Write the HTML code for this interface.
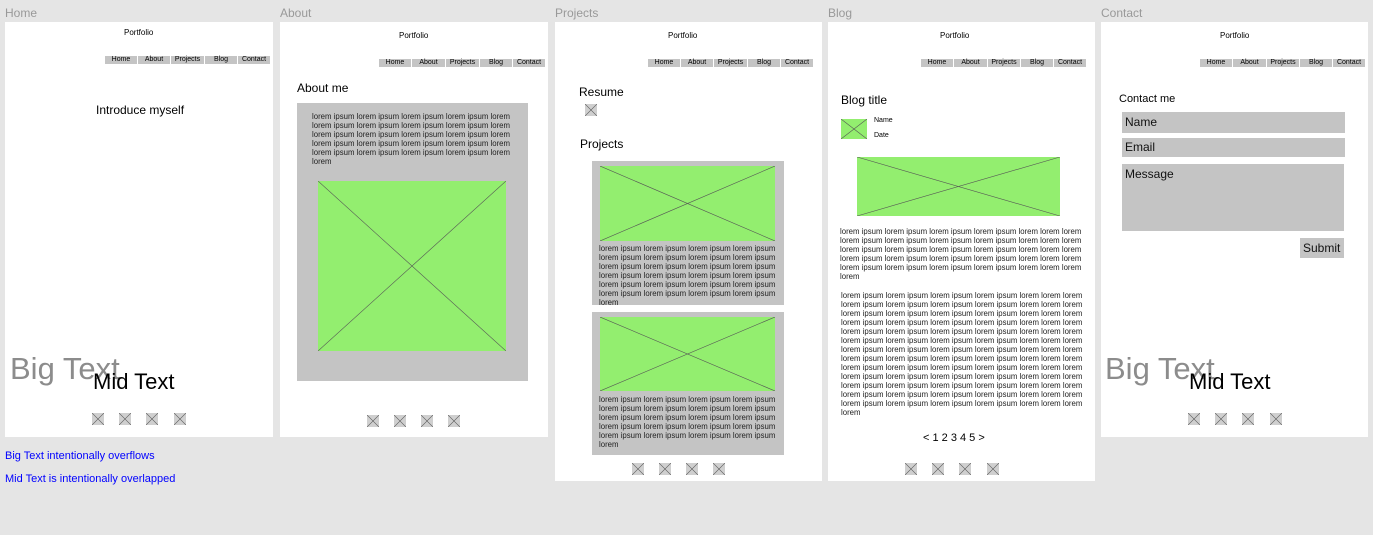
<!DOCTYPE html>
<html><head><meta charset="utf-8"><style>
*{margin:0;padding:0;box-sizing:border-box}
body{width:1373px;height:535px;background:#e5e5e5;position:relative;overflow:hidden;font-family:"Liberation Sans",Arial,sans-serif;color:#000}
.a{position:absolute}
.lbl{font-size:12px;color:#999;top:6px}
.fr{background:#fff}
.pf{font-size:8px;line-height:10px}
.nav{font-size:7px;line-height:8px;text-align:center;background:#c4c4c4;height:8px}
.h{font-size:12px;line-height:14px}
.lo{font-size:7.8px;line-height:9px;white-space:nowrap;color:#222}
.ic{width:12px;height:12px;background:#cfcfcf}
.big{font-size:31px;color:#8c8c8c;line-height:32px}
.mid{font-size:22px;line-height:24px}
.blue{color:#0000ff;font-size:11px}
.fld{background:#c4c4c4;font-size:12px;padding:3px 3px;line-height:14px;color:#111}
</style></head><body>
<svg width="0" height="0" style="position:absolute"><defs>
<symbol id="x" viewBox="0 0 10 10" preserveAspectRatio="none"><path d="M0 0L10 10M10 0L0 10" stroke="#555" fill="none" vector-effect="non-scaling-stroke" style="stroke-width:.6px"/></symbol>
</defs></svg>

<div class="a lbl" style="left:5px">Home</div>
<div class="a lbl" style="left:280px">About</div>
<div class="a lbl" style="left:555px">Projects</div>
<div class="a lbl" style="left:828px">Blog</div>
<div class="a lbl" style="left:1101px">Contact</div>

<!-- HOME -->
<div class="a fr" style="left:5px;top:22px;width:268px;height:415px"></div>
<div class="a pf" style="left:124px;top:28px">Portfolio</div>
<div class="a nav" style="left:105px;top:56px;width:32px">Home</div>
<div class="a nav" style="left:138px;top:56px;width:32px">About</div>
<div class="a nav" style="left:171px;top:56px;width:33px">Projects</div>
<div class="a nav" style="left:205px;top:56px;width:32px">Blog</div>
<div class="a nav" style="left:238px;top:56px;width:32px">Contact</div>
<div class="a h" style="left:96px;top:103px">Introduce myself</div>
<div class="a big" style="left:10px;top:353px">Big Text</div>
<div class="a mid" style="left:93px;top:370px">Mid Text</div>
<svg class="a ic" style="left:92px;top:413px"><use href="#x" width="12" height="12"/></svg>
<svg class="a ic" style="left:119px;top:413px"><use href="#x" width="12" height="12"/></svg>
<svg class="a ic" style="left:146px;top:413px"><use href="#x" width="12" height="12"/></svg>
<svg class="a ic" style="left:174px;top:413px"><use href="#x" width="12" height="12"/></svg>
<div class="a blue" style="left:5px;top:450px">Big Text intentionally overflows</div>
<div class="a blue" style="left:5px;top:473px">Mid Text is intentionally overlapped</div>

<!-- ABOUT -->
<div class="a fr" style="left:280px;top:22px;width:268px;height:415px"></div>
<div class="a pf" style="left:399px;top:31px">Portfolio</div>
<div class="a nav" style="left:379px;top:59px;width:32px">Home</div>
<div class="a nav" style="left:412px;top:59px;width:33px">About</div>
<div class="a nav" style="left:446px;top:59px;width:33px">Projects</div>
<div class="a nav" style="left:480px;top:59px;width:32px">Blog</div>
<div class="a nav" style="left:513px;top:59px;width:32px">Contact</div>
<div class="a h" style="left:297px;top:81px">About me</div>
<div class="a" style="left:297px;top:103px;width:231px;height:278px;background:#c4c4c4"></div>
<div class="a lo" style="left:312px;top:112px">lorem ipsum lorem ipsum lorem ipsum lorem ipsum lorem<br>lorem ipsum lorem ipsum lorem ipsum lorem ipsum lorem<br>lorem ipsum lorem ipsum lorem ipsum lorem ipsum lorem<br>lorem ipsum lorem ipsum lorem ipsum lorem ipsum lorem<br>lorem ipsum lorem ipsum lorem ipsum lorem ipsum lorem<br>lorem</div>
<svg class="a" style="left:318px;top:181px;width:188px;height:170px;background:#93ee6f"><use href="#x" width="188" height="170"/></svg>
<svg class="a ic" style="left:367px;top:415px"><use href="#x" width="12" height="12"/></svg>
<svg class="a ic" style="left:394px;top:415px"><use href="#x" width="12" height="12"/></svg>
<svg class="a ic" style="left:421px;top:415px"><use href="#x" width="12" height="12"/></svg>
<svg class="a ic" style="left:448px;top:415px"><use href="#x" width="12" height="12"/></svg>

<!-- PROJECTS -->
<div class="a fr" style="left:555px;top:22px;width:267px;height:459px"></div>
<div class="a pf" style="left:668px;top:31px">Portfolio</div>
<div class="a nav" style="left:648px;top:59px;width:32px">Home</div>
<div class="a nav" style="left:681px;top:59px;width:32px">About</div>
<div class="a nav" style="left:714px;top:59px;width:33px">Projects</div>
<div class="a nav" style="left:748px;top:59px;width:32px">Blog</div>
<div class="a nav" style="left:781px;top:59px;width:32px">Contact</div>
<div class="a h" style="left:579px;top:85px">Resume</div>
<svg class="a ic" style="left:585px;top:104px"><use href="#x" width="12" height="12"/></svg>
<div class="a h" style="left:580px;top:137px">Projects</div>
<div class="a" style="left:592px;top:161px;width:192px;height:144px;background:#c4c4c4"></div>
<svg class="a" style="left:600px;top:166px;width:175px;height:75px;background:#93ee6f"><use href="#x" width="175" height="75"/></svg>
<div class="a lo" style="left:599px;top:244px">lorem ipsum lorem ipsum lorem ipsum lorem ipsum<br>lorem ipsum lorem ipsum lorem ipsum lorem ipsum<br>lorem ipsum lorem ipsum lorem ipsum lorem ipsum<br>lorem ipsum lorem ipsum lorem ipsum lorem ipsum<br>lorem ipsum lorem ipsum lorem ipsum lorem ipsum<br>lorem ipsum lorem ipsum lorem ipsum lorem ipsum<br>lorem</div>
<div class="a" style="left:592px;top:312px;width:192px;height:143px;background:#c4c4c4"></div>
<svg class="a" style="left:600px;top:317px;width:175px;height:74px;background:#93ee6f"><use href="#x" width="175" height="74"/></svg>
<div class="a lo" style="left:599px;top:395px">lorem ipsum lorem ipsum lorem ipsum lorem ipsum<br>lorem ipsum lorem ipsum lorem ipsum lorem ipsum<br>lorem ipsum lorem ipsum lorem ipsum lorem ipsum<br>lorem ipsum lorem ipsum lorem ipsum lorem ipsum<br>lorem ipsum lorem ipsum lorem ipsum lorem ipsum<br>lorem</div>
<svg class="a ic" style="left:632px;top:463px"><use href="#x" width="12" height="12"/></svg>
<svg class="a ic" style="left:659px;top:463px"><use href="#x" width="12" height="12"/></svg>
<svg class="a ic" style="left:686px;top:463px"><use href="#x" width="12" height="12"/></svg>
<svg class="a ic" style="left:713px;top:463px"><use href="#x" width="12" height="12"/></svg>

<!-- BLOG -->
<div class="a fr" style="left:828px;top:22px;width:267px;height:459px"></div>
<div class="a pf" style="left:940px;top:31px">Portfolio</div>
<div class="a nav" style="left:921px;top:59px;width:32px">Home</div>
<div class="a nav" style="left:954px;top:59px;width:33px">About</div>
<div class="a nav" style="left:988px;top:59px;width:32px">Projects</div>
<div class="a nav" style="left:1021px;top:59px;width:32px">Blog</div>
<div class="a nav" style="left:1054px;top:59px;width:32px">Contact</div>
<div class="a h" style="left:841px;top:93px">Blog title</div>
<svg class="a" style="left:841px;top:119px;width:26px;height:20px;background:#93ee6f"><use href="#x" width="26" height="20"/></svg>
<div class="a" style="left:874px;top:117px;font-size:7px">Name</div>
<div class="a" style="left:874px;top:132px;font-size:7px">Date</div>
<svg class="a" style="left:857px;top:157px;width:203px;height:59px;background:#93ee6f"><use href="#x" width="203" height="59"/></svg>
<div class="a lo" style="left:840px;top:227px">lorem ipsum lorem ipsum lorem ipsum lorem ipsum lorem lorem lorem<br>lorem ipsum lorem ipsum lorem ipsum lorem ipsum lorem lorem lorem<br>lorem ipsum lorem ipsum lorem ipsum lorem ipsum lorem lorem lorem<br>lorem ipsum lorem ipsum lorem ipsum lorem ipsum lorem lorem lorem<br>lorem ipsum lorem ipsum lorem ipsum lorem ipsum lorem lorem lorem<br>lorem</div>
<div class="a lo" style="left:841px;top:291px">lorem ipsum lorem ipsum lorem ipsum lorem ipsum lorem lorem lorem<br>lorem ipsum lorem ipsum lorem ipsum lorem ipsum lorem lorem lorem<br>lorem ipsum lorem ipsum lorem ipsum lorem ipsum lorem lorem lorem<br>lorem ipsum lorem ipsum lorem ipsum lorem ipsum lorem lorem lorem<br>lorem ipsum lorem ipsum lorem ipsum lorem ipsum lorem lorem lorem<br>lorem ipsum lorem ipsum lorem ipsum lorem ipsum lorem lorem lorem<br>lorem ipsum lorem ipsum lorem ipsum lorem ipsum lorem lorem lorem<br>lorem ipsum lorem ipsum lorem ipsum lorem ipsum lorem lorem lorem<br>lorem ipsum lorem ipsum lorem ipsum lorem ipsum lorem lorem lorem<br>lorem ipsum lorem ipsum lorem ipsum lorem ipsum lorem lorem lorem<br>lorem ipsum lorem ipsum lorem ipsum lorem ipsum lorem lorem lorem<br>lorem ipsum lorem ipsum lorem ipsum lorem ipsum lorem lorem lorem<br>lorem ipsum lorem ipsum lorem ipsum lorem ipsum lorem lorem lorem<br>lorem</div>
<div class="a" style="left:923px;top:432px;font-size:11px">&lt; 1 2 3 4 5 &gt;</div>
<svg class="a ic" style="left:905px;top:463px"><use href="#x" width="12" height="12"/></svg>
<svg class="a ic" style="left:932px;top:463px"><use href="#x" width="12" height="12"/></svg>
<svg class="a ic" style="left:959px;top:463px"><use href="#x" width="12" height="12"/></svg>
<svg class="a ic" style="left:987px;top:463px"><use href="#x" width="12" height="12"/></svg>

<!-- CONTACT -->
<div class="a fr" style="left:1101px;top:22px;width:267px;height:415px"></div>
<div class="a pf" style="left:1220px;top:31px">Portfolio</div>
<div class="a nav" style="left:1200px;top:59px;width:32px">Home</div>
<div class="a nav" style="left:1233px;top:59px;width:33px">About</div>
<div class="a nav" style="left:1267px;top:59px;width:32px">Projects</div>
<div class="a nav" style="left:1300px;top:59px;width:32px">Blog</div>
<div class="a nav" style="left:1333px;top:59px;width:32px">Contact</div>
<div class="a" style="left:1119px;top:93px;font-size:11px">Contact me</div>
<div class="a fld" style="left:1122px;top:112px;width:223px;height:21px">Name</div>
<div class="a fld" style="left:1122px;top:138px;width:223px;height:19px;padding-top:2px">Email</div>
<div class="a fld" style="left:1122px;top:164px;width:222px;height:67px">Message</div>
<div class="a fld" style="left:1300px;top:238px;width:44px;height:20px">Submit</div>
<div class="a big" style="left:1105px;top:353px">Big Text</div>
<div class="a mid" style="left:1189px;top:370px">Mid Text</div>
<svg class="a ic" style="left:1188px;top:413px"><use href="#x" width="12" height="12"/></svg>
<svg class="a ic" style="left:1215px;top:413px"><use href="#x" width="12" height="12"/></svg>
<svg class="a ic" style="left:1242px;top:413px"><use href="#x" width="12" height="12"/></svg>
<svg class="a ic" style="left:1270px;top:413px"><use href="#x" width="12" height="12"/></svg>
</body></html>
